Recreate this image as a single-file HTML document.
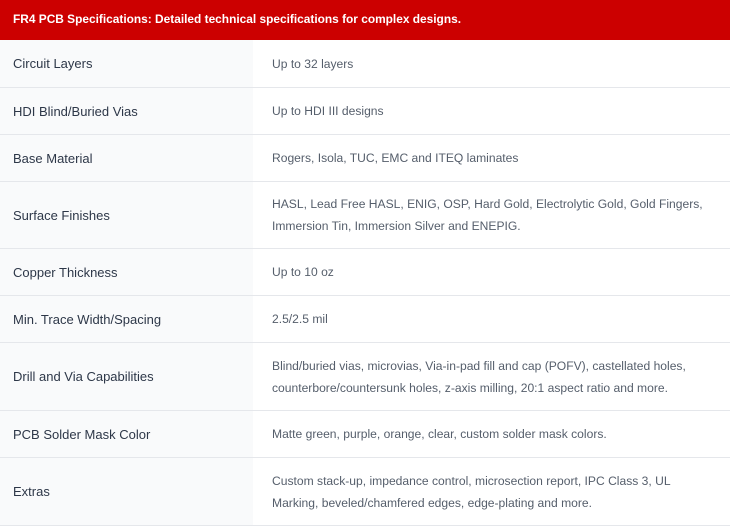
<!DOCTYPE html>
<html><head><style>
body{margin:0;width:730px;height:518px;overflow:hidden;background:#fff;font-family:"Liberation Sans",sans-serif;}
.h{background:#cc0000;color:#fff;font-weight:bold;font-size:11.9px;height:40px;line-height:38px;padding-left:13px;}
.r{display:flex;border-bottom:1px solid #e5e7eb;box-sizing:border-box;}
.l{width:253px;background:#f9fafb;color:#2d3748;font-size:13px;padding-left:13px;box-sizing:border-box;display:flex;align-items:center;}
.v{flex:1;color:#555e6b;font-size:12.1px;padding-left:19px;line-height:22px;display:flex;align-items:center;white-space:nowrap;}
</style></head><body>
<div class="h">FR4 PCB Specifications: Detailed technical specifications for complex designs.</div>
<div class="r" style="height:48px"><div class="l">Circuit Layers</div><div class="v">Up to 32 layers</div></div>
<div class="r" style="height:47px"><div class="l">HDI Blind/Buried Vias</div><div class="v">Up to HDI III designs</div></div>
<div class="r" style="height:47px"><div class="l">Base Material</div><div class="v">Rogers, Isola, TUC, EMC and ITEQ laminates</div></div>
<div class="r" style="height:67px"><div class="l">Surface Finishes</div><div class="v">HASL, Lead Free HASL, ENIG, OSP, Hard Gold, Electrolytic Gold, Gold Fingers,<br>Immersion Tin, Immersion Silver and ENEPIG.</div></div>
<div class="r" style="height:47px"><div class="l">Copper Thickness</div><div class="v">Up to 10 oz</div></div>
<div class="r" style="height:47px"><div class="l">Min. Trace Width/Spacing</div><div class="v">2.5/2.5 mil</div></div>
<div class="r" style="height:68px"><div class="l">Drill and Via Capabilities</div><div class="v">Blind/buried vias, microvias, Via-in-pad fill and cap (POFV), castellated holes,<br>counterbore/countersunk holes, z-axis milling, 20:1 aspect ratio and more.</div></div>
<div class="r" style="height:47px"><div class="l">PCB Solder Mask Color</div><div class="v">Matte green, purple, orange, clear, custom solder mask colors.</div></div>
<div class="r" style="height:68px"><div class="l">Extras</div><div class="v">Custom stack-up, impedance control, microsection report, IPC Class 3, UL<br>Marking, beveled/chamfered edges, edge-plating and more.</div></div>
</body></html>
